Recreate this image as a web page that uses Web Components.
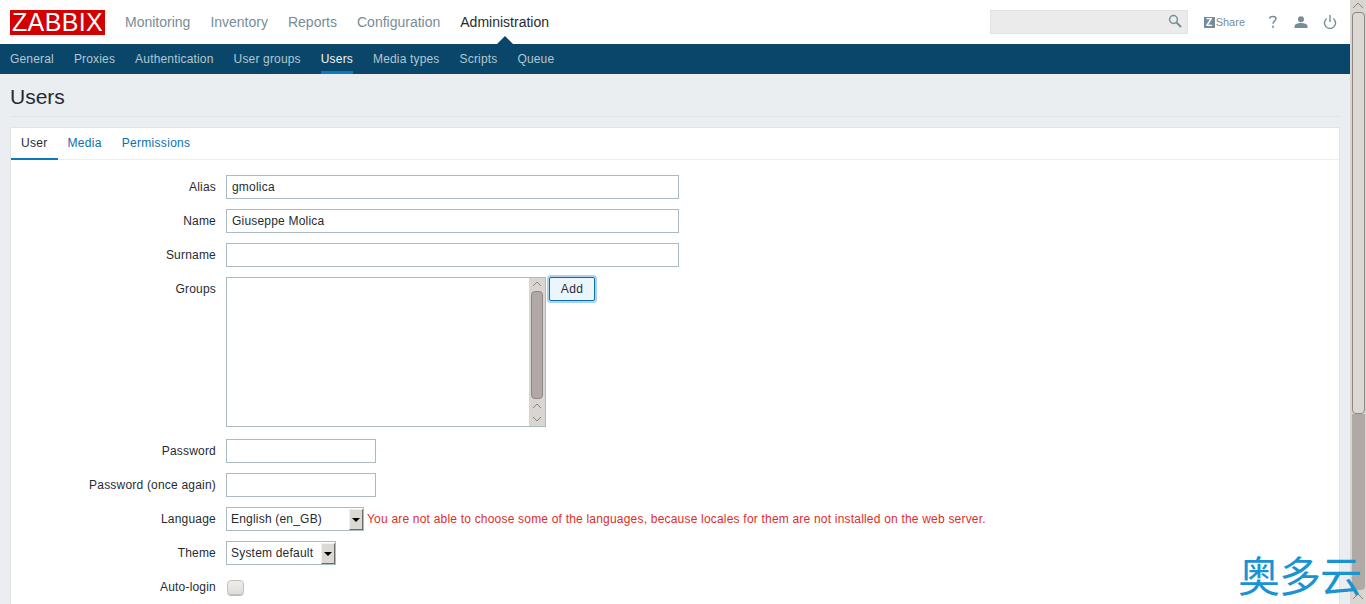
<!DOCTYPE html>
<html><head><meta charset="utf-8"><style>
html,body{margin:0;padding:0;height:604px;overflow:hidden;background:#ebeef0;font-family:"Liberation Sans",Arial,sans-serif;font-size:12px;color:#1f2c33}
zbx-app{display:flex;width:1366px;height:604px;overflow:hidden}
</style></head><body>
<zbx-app>
  <zbx-main>
    <zbx-topbar></zbx-topbar>
    <zbx-subnav></zbx-subnav>
    <zbx-title>Users</zbx-title>
    <zbx-card>
      <zbx-tabs></zbx-tabs>
      <zbx-form></zbx-form>
    </zbx-card>
  </zbx-main>
  <zbx-scrollbar></zbx-scrollbar>
  <zbx-watermark>奥多云</zbx-watermark>
</zbx-app>
<script>
function def(name,html){customElements.define(name,class extends HTMLElement{constructor(){super();this.attachShadow({mode:'open'}).innerHTML=html}})}
def('zbx-main',`<style>:host{display:block;width:1350px;height:604px;overflow:hidden;flex:none}</style><slot></slot>`);
def('zbx-topbar',`<style>
:host{display:flex;align-items:center;height:44px;background:#fff;padding-left:10px;box-sizing:border-box}
.logo{width:95px;height:25px;background:#d40000;color:#fff;font-size:25px;line-height:25px;text-align:center;letter-spacing:.35px;flex:none;margin-right:10px;overflow:hidden}
a{font-size:14px;color:#768d99;padding:0 10px;line-height:44px;position:relative}
a.on{color:#1f2c33}
a.on::after{content:"";position:absolute;left:50%;margin-left:-8px;bottom:0;border:8px solid transparent;border-top:0;border-bottom-color:#0a466a}
.sp{flex:1}
.search{width:198px;height:24px;box-sizing:border-box;background:#ebebeb;border:1px solid #e2e2e2;margin-right:16px;position:relative}
.search svg{position:absolute;right:5px;top:3px}
.share{display:flex;align-items:center;color:#768d99;font-size:11px;margin-right:22px}
.share b{display:block;width:11px;height:11px;background:#768d99;color:#fff;font:bold 10px/11px "Liberation Sans";text-align:center;margin-right:1px}
.ic{display:block;margin-right:15px}
.last{margin-right:13px}
</style>
<div class="logo">ZABBIX</div>
<a>Monitoring</a><a>Inventory</a><a>Reports</a><a>Configuration</a><a class="on">Administration</a>
<div class="sp"></div>
<div class="search"><svg width="14" height="14" viewBox="0 0 14 14" fill="none" stroke="#768d99"><circle cx="5.5" cy="5.5" r="3.9" stroke-width="1.5"/><path d="M8.5 8.5L13 13" stroke-width="2"/></svg></div>
<div class="share"><b>Z</b>Share</div>
<svg class="ic" width="12" height="14" viewBox="0 0 12 14" fill="none" stroke="#768d99" stroke-width="1.5"><path d="M2.5 3.5C3 .8 9 .6 9 3.8C9 6 6 5.8 6 8.8"/><path d="M6 10.5V13"/></svg>
<svg class="ic" width="14" height="12" viewBox="0 0 14 12" fill="#768d99"><circle cx="7" cy="3.2" r="3"/><path d="M.5 12V10C.5 8 4 7 7 7S13.500 8 13.500 10V12Z"/></svg>
<svg class="ic last" width="14" height="14" viewBox="0 0 14 14" fill="none" stroke="#768d99" stroke-width="1.400"><path d="M3.700 3.500A5.500 5.500 0 1 0 10.300 3.500"/><path d="M7 0V7"/></svg>`);
def('zbx-subnav',`<style>
:host{display:flex;height:30px;background:#0a466a;padding-left:0;box-sizing:border-box}
a{font-size:12px;color:#b3c6d0;padding:0 10px;line-height:30px;position:relative;letter-spacing:.17px}
a.on{color:#f2f5f7}
a.on::after{content:"";position:absolute;left:10px;right:10px;bottom:0;height:3px;background:#0a7abf}
</style><a>General</a><a>Proxies</a><a>Authentication</a><a>User groups</a><a class="on">Users</a><a>Media types</a><a>Scripts</a><a>Queue</a>`);
def('zbx-title',`<style>
:host{display:block;margin:0 10px;height:42px;border-bottom:1px solid #dfe4e7;font-size:21px;line-height:46px;color:#1f2c33}
</style><slot></slot>`);
def('zbx-card',`<style>
:host{display:block;margin:10px 10px 0 11px;background:#fff;border:1px solid #dfe4e7;border-left:0;height:600px;box-shadow:-1px 0 0 #dfe4e7}
</style><slot></slot>`);
def('zbx-tabs',`<style>
:host{display:flex;height:31px;border-bottom:1px solid #ebeef0}
a{color:#0a6fae;padding:0 10px;line-height:30px;letter-spacing:.3px;position:relative;margin-right:0}
a.on{color:#1f2c33}
a.on::after{content:"";position:absolute;left:0;right:0;bottom:-1px;height:2px;background:#0a7abf}
</style><a class="on">User</a><a>Media</a><a>Permissions</a>`);
def('zbx-input',`<style>
:host{display:block;box-sizing:border-box;height:24px;border:1px solid #acbbc2;background:#fff;padding:0 5px;line-height:22px;letter-spacing:.2px;color:#1f2c33}
</style><slot></slot>`);
def('zbx-select',`<style>
:host{display:inline-flex;box-sizing:border-box;height:24px;border:1px solid #acbbc2;background:#fff;padding-left:4px;line-height:22px;letter-spacing:.2px;flex:none}
.t{flex:1}
.b{width:14px;box-sizing:border-box;margin:1px 0 0 0;height:21px;background:#dcd9d4;border:1px solid;border-color:#f2f0ee #6e6a66 #6e6a66 #f2f0ee;position:relative}
.b::after{content:"";position:absolute;left:2px;top:8px;border:4px solid transparent;border-top-color:#000;border-bottom:0}
</style><span class="t"><slot></slot></span><span class="b"></span>`);
def('zbx-groups',`<style>
:host{display:block;box-sizing:border-box;width:320px;height:150px;border:1px solid #acbbc2;background:#fff;position:relative}
.sb{position:absolute;right:0;top:0;bottom:0;width:16px;background:#d9d5d0;display:flex;flex-direction:column;align-items:center}
.arr{height:13px;flex:none;display:block}
.th{width:12px;flex:1;box-sizing:border-box;border:1px solid #8e8783;border-radius:4px;background:#b1a9a5;margin:0 0 1px}
</style><div class="sb">
<svg class="arr" width="12" height="13" viewBox="0 0 12 13" fill="none" stroke="#8a8683"><path d="M2 8L6 4L10 8"/></svg>
<div class="th"></div>
<svg class="arr" width="12" height="13" viewBox="0 0 12 13" fill="none" stroke="#8a8683"><path d="M2 8L6 4L10 8"/></svg>
<svg class="arr" width="12" height="13" viewBox="0 0 12 13" fill="none" stroke="#8a8683"><path d="M2 4L6 8L10 4"/></svg>
</div>`);
def('zbx-form',`<style>
:host{display:grid;grid-template-columns:205px 1fr;column-gap:10px;row-gap:10px;padding-top:15px;align-items:start}
label{justify-self:end;line-height:24px;letter-spacing:.2px;color:#1f2c33}
.w453{width:453px}.w150{width:150px}
.row{display:flex;align-items:flex-start}
.row2{display:flex;align-items:center;height:24px}
.add{box-sizing:border-box;width:46px;height:24px;margin-left:3px;border:1px solid #0a6fae;border-radius:2px;background:#ecf5fb;box-shadow:0 0 0 2px #a9d3f0;line-height:22px;text-align:center;letter-spacing:.3px;margin-top:0}
.err{color:#dc2d2d;margin-left:3px;letter-spacing:.2px;white-space:nowrap}
.chk{box-sizing:border-box;width:17px;height:15px;border:1px solid #c4c1bc;border-radius:4px;background:linear-gradient(#f0eeec,#dfdcd8);margin-left:1px;box-shadow:0 1px 0 #bbb}
</style>
<label>Alias</label><zbx-input class="w453">gmolica</zbx-input>
<label>Name</label><zbx-input class="w453">Giuseppe Molica</zbx-input>
<label>Surname</label><zbx-input class="w453"></zbx-input>
<label>Groups</label><div class="row"><zbx-groups></zbx-groups><div class="add">Add</div></div>
<label style="margin-top:2px">Password</label><zbx-input class="w150" style="margin-top:2px"></zbx-input>
<label>Password (once again)</label><zbx-input class="w150"></zbx-input>
<label>Language</label><div class="row2"><zbx-select style="width:138px">English (en_GB)</zbx-select><span class="err">You are not able to choose some of the languages, because locales for them are not installed on the web server.</span></div>
<label>Theme</label><div class="row2"><zbx-select style="width:110px">System default</zbx-select></div>
<label>Auto-login</label><div class="row2"><div class="chk"></div></div>`);
def('zbx-scrollbar',`<style>
:host{display:flex;flex-direction:column;align-items:center;width:16px;height:604px;background:#d9d5d0;flex:none}
.arr{display:block;flex:none}
.th1{width:13px;height:402px;margin-top:-1px;box-sizing:border-box;border:1px solid #8e8783;border-radius:4px;background:#dcd8d4;flex:none}
.tr{flex:1;width:13px;background:#b1a9a5;border-radius:0 0 4px 4px;margin-bottom:1px}
</style>
<svg class="arr" width="16" height="13" viewBox="0 0 16 13" fill="none" stroke="#8a8683"><path d="M3 8L8 3L13 8"/></svg>
<div class="th1"></div><div class="tr"></div>
<svg class="arr" width="16" height="13" viewBox="0 0 16 13" fill="none" stroke="#8a8683"><path d="M3 8L8 3L13 8"/></svg>`);
def('zbx-watermark',`<style>
:host{position:absolute;left:1238px;top:550px;font:42px/48px "Noto Sans CJK SC",sans-serif;color:#1a93d3;letter-spacing:-1px;white-space:nowrap}
</style><slot></slot>`);
</script>
</body></html>
